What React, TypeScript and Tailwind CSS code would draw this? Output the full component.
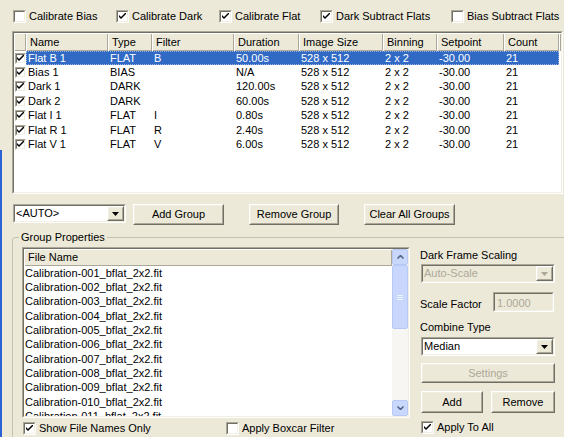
import React from 'react';

const rows = [
  { name: 'Flat B 1', type: 'FLAT', filter: 'B', duration: '50.00s' },
  { name: 'Bias 1', type: 'BIAS', filter: '', duration: 'N/A' },
  { name: 'Dark 1', type: 'DARK', filter: '', duration: '120.00s' },
  { name: 'Dark 2', type: 'DARK', filter: '', duration: '60.00s' },
  { name: 'Flat I 1', type: 'FLAT', filter: 'I', duration: '0.80s' },
  { name: 'Flat R 1', type: 'FLAT', filter: 'R', duration: '2.40s' },
  { name: 'Flat V 1', type: 'FLAT', filter: 'V', duration: '6.00s' },
];

const files = Array.from({ length: 12 }, (_, i) => `Calibration-${String(i + 1).padStart(3, '0')}_bflat_2x2.fit`);

const Tick = ({ size = 7 }: { size?: number }) => (
  <svg width={size} height={size} viewBox="0 0 7 7">
    <path d="M0 2 L0 4 L2 6 L7 1 L7 -1 L2 4 Z" fill="#000" />
  </svg>
);

// classic 3D sunken box
const Sunken = ({ className = '', inner = '', children }: { className?: string; inner?: string; children?: React.ReactNode }) => (
  <div className={`border border-t-[#ACA899] border-l-[#ACA899] border-r-white border-b-white ${className}`}>
    <div className={`h-full w-full border border-t-[#716F64] border-l-[#716F64] border-r-[#F1EFE2] border-b-[#F1EFE2] ${inner}`}>
      {children}
    </div>
  </div>
);

const Raised = ({ className = '', children }: { className?: string; children?: React.ReactNode }) => (
  <div className={`border border-t-white border-l-white border-r-[#716F64] border-b-[#716F64] bg-[#ECE9D8] ${className}`}>
    <div className="flex h-full w-full items-center justify-center border border-t-[#F1EFE2] border-l-[#F1EFE2] border-r-[#ACA899] border-b-[#ACA899]">
      {children}
    </div>
  </div>
);

const CheckBox = ({ checked, small = false }: { checked: boolean; small?: boolean }) => (
  <Sunken className={small ? 'h-[11px] w-[11px]' : 'h-[13px] w-[13px]'} inner="flex items-center justify-center bg-white">
    {checked && <Tick size={small ? 7 : 7} />}
  </Sunken>
);

const Labeled = ({ checked, label, className = '' }: { checked: boolean; label: string; className?: string }) => (
  <div className={`flex items-center ${className}`}>
    <CheckBox checked={checked} />
    <span className="ml-[3px] leading-[13px]">{label}</span>
  </div>
);

const Combo = ({ value, disabled = false, className = '' }: { value: string; disabled?: boolean; className?: string }) => (
  <Sunken className={className} inner={`flex items-center ${disabled ? 'bg-[#ECE9D8]' : 'bg-white'}`}>
    <span className={`flex-1 pl-[1px] leading-[13px] ${disabled ? 'text-[#ACA899]' : ''}`}>{value}</span>
    <Raised className="h-full w-[17px]">
      <svg width="7" height="4" viewBox="0 0 7 4">
        <path d="M0 0 H7 L3.5 4 Z" fill={disabled ? '#ACA899' : '#000'} />
      </svg>
    </Raised>
  </Sunken>
);

const Btn = ({ label, className = '', disabled = false }: { label: string; className?: string; disabled?: boolean }) => (
  <Raised className={className}>
    <span className={disabled ? 'text-[#ACA899]' : ''}>{label}</span>
  </Raised>
);

const cols = [
  { key: 'name', title: 'Name', w: 'w-[82px]' },
  { key: 'type', title: 'Type', w: 'w-[44px]' },
  { key: 'filter', title: 'Filter', w: 'w-[82px]' },
  { key: 'duration', title: 'Duration', w: 'w-[65px]' },
  { key: 'size', title: 'Image Size', w: 'w-[84px]' },
  { key: 'bin', title: 'Binning', w: 'w-[54px]' },
  { key: 'set', title: 'Setpoint', w: 'w-[67px]' },
  { key: 'count', title: 'Count', w: 'w-[55px]' },
];

const ScrollArrow = ({ up }: { up: boolean }) => (
  <div className="flex h-[16px] w-[16px] items-center justify-center rounded-[2px] border border-[#B7CAF5] bg-[#C8D7FB]">
    <svg width="7" height="4" viewBox="0 0 7 4">
      <path d={up ? 'M0.5 3.5 L3.5 0.5 L6.5 3.5' : 'M0.5 0.5 L3.5 3.5 L6.5 0.5'} stroke="#4D6185" strokeWidth="1.5" fill="none" />
    </svg>
  </div>
);

export default function App() {
  return (
    <div className="relative h-[437px] w-[564px] overflow-hidden bg-[#ECE9D8] font-['Liberation_Sans',Arial,sans-serif] text-[11px] text-black">
      <div className="absolute left-0 top-[150px] h-[300px] w-[2px] bg-[#2B63D6]" />

      {/* top options */}
      <div className="flex h-[31px] items-start pl-[13px] pt-[10px]">
        <Labeled checked={false} label="Calibrate Bias" className="w-[103px]" />
        <Labeled checked label="Calibrate Dark" className="w-[103px]" />
        <Labeled checked label="Calibrate Flat" className="w-[101px]" />
        <Labeled checked label="Dark Subtract Flats" className="w-[131px]" />
        <Labeled checked={false} label="Bias Subtract Flats" />
      </div>

      {/* group list */}
      <Sunken className="ml-[12px] h-[163px] w-[551px]" inner="bg-white overflow-hidden">
        <div className="flex h-[18px] bg-[#ECE9D8]">
          <div className="w-[12px] shadow-[inset_1px_1px_0_#fff,inset_-1px_-1px_0_#ACA899]" />
          {cols.map((c) => (
            <div key={c.key} className={`${c.w} flex items-center pl-[4px] shadow-[inset_1px_1px_0_#fff,inset_-1px_-1px_0_#ACA899]`}>
              {c.title}
            </div>
          ))}
          <div className="flex-1 shadow-[inset_1px_1px_0_#fff,inset_-1px_-1px_0_#ACA899]" />
        </div>
        {rows.map((r, i) => {
          const sel = i === 0;
          const vals: Record<string, string> = {
            name: r.name,
            type: r.type,
            filter: r.filter,
            duration: r.duration,
            size: '528 x 512',
            bin: '2 x 2',
            set: '-30.00',
            count: '21',
          };
          return (
            <div key={r.name} className="flex h-[14.4px] items-center">
              <div className="flex w-[12px] items-center justify-center pl-[1px]">
                <CheckBox checked small />
              </div>
              <div className={`flex h-full items-center ${sel ? 'bg-[#316AC5] text-white outline-1 outline-dotted outline-offset-[-1px] outline-[#9DB4DE]' : ''}`}>
                {cols.map((c) => (
                  <div key={c.key} className={`${c.w} whitespace-nowrap pl-[2px] leading-[13px]`}>
                    {vals[c.key]}
                  </div>
                ))}
              </div>
            </div>
          );
        })}
      </Sunken>

      {/* group controls */}
      <div className="mt-[10px] flex items-start pl-[13px]">
        <Combo value="<AUTO>" className="h-[19px] w-[113px]" />
        <Btn label="Add Group" className="ml-[7px] h-[21px] w-[91px]" />
        <Btn label="Remove Group" className="ml-[25px] h-[21px] w-[90px]" />
        <Btn label="Clear All Groups" className="ml-[25px] h-[21px] w-[91px]" />
      </div>

      {/* group properties */}
      <fieldset className="ml-[12px] mt-[6px] h-[240px] w-[570px] rounded-[3px] border border-[#C5C2B2] pt-[3px]">
        <legend className="ml-[6px] px-[2px] leading-[13px]">Group Properties</legend>
        <div className="flex">
          <div className="ml-[9px] w-[388px]">
            <Sunken className="h-[171px] w-[388px]" inner="flex bg-white overflow-hidden">
              <div className="flex-1 overflow-hidden">
                <div className="flex h-[17px] items-center bg-[#ECE9D8] pl-[4px] shadow-[inset_1px_1px_0_#fff,inset_-1px_-1px_0_#ACA899]">
                  File Name
                </div>
                {files.map((f) => (
                  <div key={f} className="flex h-[14.33px] items-center whitespace-nowrap pl-[1px] leading-[13px]">
                    {f}
                  </div>
                ))}
              </div>
              <div className="flex w-[16px] flex-col bg-[#F7F6F2]">
                <ScrollArrow up />
                <div className="flex h-[64px] items-center justify-center rounded-[2px] border border-[#B7CAF5] bg-[#C8D7FB]">
                  <div className="flex flex-col gap-[1px]">
                    <div className="h-[1px] w-[6px] bg-[#EEF3FE]" />
                    <div className="h-[1px] w-[6px] bg-[#EEF3FE]" />
                    <div className="h-[1px] w-[6px] bg-[#EEF3FE]" />
                  </div>
                </div>
                <div className="flex-1" />
                <ScrollArrow up={false} />
              </div>
            </Sunken>
            <div className="mt-[4px] flex items-center pl-[1px]">
              <Labeled checked label="Show File Names Only" className="w-[203px]" />
              <Labeled checked={false} label="Apply Boxcar Filter" />
            </div>
          </div>

          <div className="ml-[10px] flex w-[135px] flex-col">
            <div className="h-[17px] leading-[17px]">Dark Frame Scaling</div>
            <Combo value="Auto-Scale" disabled className="ml-[1px] h-[19px] w-[134px]" />
            <div className="mt-[9px] flex items-start">
              <span className="mt-[6px] w-[73px] leading-[13px]">Scale Factor</span>
              <Sunken className="h-[20px] w-[61px]" inner="bg-[#ECE9D8] pl-[2px] pt-[1px]">
                <span className="leading-[13px] text-[#ACA899]">1.0000</span>
              </Sunken>
            </div>
            <div className="mt-[9px] h-[13px] leading-[13px]">Combine Type</div>
            <Combo value="Median" className="ml-[1px] mt-[3px] h-[19px] w-[134px]" />
            <Btn label="Settings" disabled className="ml-[1px] mt-[7px] h-[20px] w-[134px]" />
            <div className="ml-[1px] mt-[8px] flex gap-[8px]">
              <Btn label="Add" className="h-[22px] w-[62px]" />
              <Btn label="Remove" className="h-[22px] w-[64px]" />
            </div>
            <Labeled checked label="Apply To All" className="ml-[1px] mt-[8px]" />
          </div>
        </div>
      </fieldset>
    </div>
  );
}
